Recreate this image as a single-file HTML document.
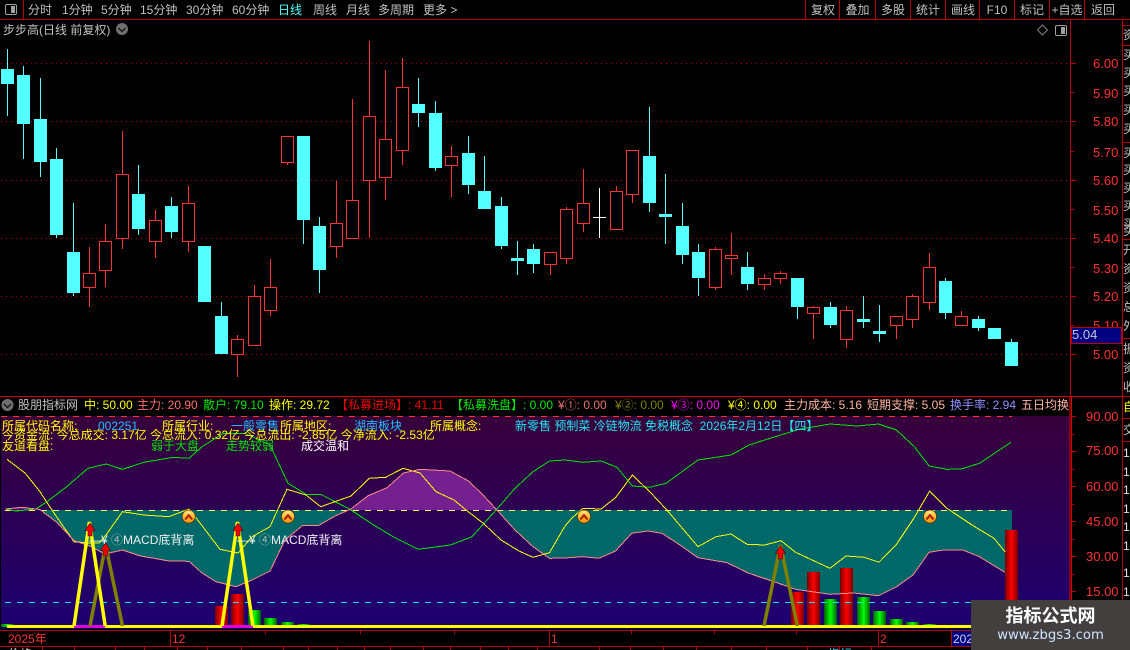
<!DOCTYPE html>
<html>
<head>
<meta charset="utf-8">
<title>K线</title>
<style>
html,body{margin:0;padding:0;background:#000;}
#r{position:relative;width:1130px;height:650px;overflow:hidden;background:#000;font-family:"Liberation Sans","WenQuanYi Zen Hei","Noto Sans CJK SC",sans-serif;font-size:12px;color:#c0c0c0;}
svg{position:absolute;left:0;top:0;}
.t{position:absolute;white-space:nowrap;line-height:14px;height:14px;}
.p{color:#ff3232;font-size:13px;left:1093px;}
.q{color:#ff3232;font-size:13px;left:1086px;}
.b{text-align:center;top:3px;}
.y{color:#ffff00}.c{color:#20c0ff}.a{color:#22e6f0}.g{color:#00e800}
#col{position:absolute;left:1123px;top:0;width:7px;height:650px;overflow:hidden;}
#wm{position:absolute;left:971px;top:600px;width:159px;height:50px;background:#433f3f;}
</style>
</head>
<body>
<div id="r">
<svg width="1130" height="650" viewBox="0 0 1130 650">
<defs>
<linearGradient id="bg" x1="0" y1="0" x2="0" y2="1"><stop offset="0" stop-color="#37003a"/><stop offset="1" stop-color="#1e0072"/></linearGradient>
<linearGradient id="rb"><stop offset="0" stop-color="#7a0000"/><stop offset=".5" stop-color="#ff0000"/><stop offset="1" stop-color="#7a0000"/></linearGradient>
<linearGradient id="gb"><stop offset="0" stop-color="#006000"/><stop offset=".5" stop-color="#00ff00"/><stop offset="1" stop-color="#006000"/></linearGradient>
<linearGradient id="og" x1="0" y1="0" x2="0" y2="1"><stop offset="0" stop-color="#ffe870"/><stop offset="1" stop-color="#ff9400"/></linearGradient>
<g id="ic"><circle r="6.5" fill="url(#og)" stroke="#5a3000" stroke-width=".7"/><path d="M-4.5 2.5 0-3 4.5 2.5 2.5 3.5 0 .5-2.5 3.5z" fill="#b02400"/><path d="M-2 -2.5 0-5 2-2.5 0-3.5z" fill="#fff6c0"/></g>
<g id="ar"><path d="M0 0 5 7.5H2V13H-2V7.5H-5z" fill="#f00000" stroke="#500000" stroke-width=".6"/></g>
</defs>

<!-- grid upper -->
<path d="M1 63.5H1070M1 121.5H1070M1 180.5H1070M1 238.5H1070M1 296.5H1070M1 354.5H1070" stroke="#b00000" stroke-dasharray="1 4" fill="none" shape-rendering="crispEdges"/>

<g shape-rendering="crispEdges">
<!-- cyan candles -->
<path fill="none" stroke="#54ffff" d="M7.5 49V116M23.5 66V159M40.5 78V177M56.5 148V238M73.5 203V296M138.5 165V235M171.5 197V238M221.5 302V354M303.5 136V244M319.5 217V293M418.5 78V127M435.5 101V171M468.5 136V194M484.5 156V209M501.5 197V249M517.5 241V275M533.5 244V273M649.5 107V212M665.5 174V244M682.5 203V264M698.5 244V296M747.5 252V290M797.5 278V319M830.5 302V328M863.5 296V328M879.5 305V342M945.5 278V319M978.5 316V331M1011.5 339V366"/>
<path fill="#54ffff" d="M1 69h13V84H1zM17 75h13V124H17zM34 119h13V162H34zM50 159h13V235H50zM67 252h13V293H67zM132 194h13V229H132zM165 206h13V232H165zM198 246h13V302H198zM215 316h13V354H215zM297 136h13V220H297zM313 226h13V270H313zM412 104h13V113H412zM429 113h13V168H429zM462 153h13V185H462zM478 191h13V209H478zM495 206h13V246H495zM511 258h13V261H511zM527 249h13V264H527zM643 156h13V203H643zM659 214h13V217H659zM676 226h13V255H676zM692 252h13V278H692zM741 267h13V284H741zM791 278h13V307H791zM824 307h13V325H824zM857 319h13V322H857zM873 331h13V334H873zM939 281h13V313H939zM972 319h13V328H972zM988 328h13V339H988zM1005 342h13V366H1005z"/>
<!-- red candles -->
<path fill="none" stroke="#ff3232" d="M89.5 247V307M105.5 224V287M122.5 131V249M155.5 210V258M188.5 186V252M237.5 335V377M254.5 285V346M270.5 259V316M287.5 136V165M336.5 181V258M352.5 99V239M369.5 41V238M385.5 70V200M402.5 58V165M451.5 146V197M550.5 252V275M566.5 207V264M583.5 169V232M616.5 186V229M632.5 150V203M715.5 247V290M731.5 233V275M764.5 274V290M780.5 271V284M813.5 306V339M846.5 306V348M896.5 316V339M912.5 294V328M929.5 253V310M961.5 311V326"/>
<path fill="#000" stroke="#ff3232" d="M83.5 273.5h12V287.5h-12zM99.5 241.5h12V270.5h-12zM116.5 174.5h12V238.5h-12zM149.5 220.5h12V241.5h-12zM182.5 203.5h12V241.5h-12zM231.5 339.5h12V354.5h-12zM248.5 296.5h12V345.5h-12zM264.5 287.5h12V310.5h-12zM281.5 136.5h12V162.5h-12zM330.5 223.5h12V246.5h-12zM346.5 200.5h12V238.5h-12zM363.5 116.5h12V180.5h-12zM379.5 139.5h12V177.5h-12zM396.5 87.5h12V150.5h-12zM445.5 156.5h12V165.5h-12zM544.5 252.5h12V264.5h-12zM560.5 209.5h12V258.5h-12zM577.5 203.5h12V223.5h-12zM610.5 191.5h12V229.5h-12zM626.5 150.5h12V194.5h-12zM709.5 249.5h12V287.5h-12zM725.5 255.5h12V258.5h-12zM758.5 278.5h12V284.5h-12zM774.5 273.5h12V278.5h-12zM807.5 307.5h12V313.5h-12zM840.5 310.5h12V339.5h-12zM890.5 316.5h12V325.5h-12zM906.5 296.5h12V319.5h-12zM923.5 267.5h12V302.5h-12zM955.5 316.5h12V325.5h-12z"/>
<!-- white doji -->
<path fill="none" stroke="#fff" d="M599.5 188V238M593 217.5H606"/>
</g>

<!-- lower panel -->
<rect x="1" y="416" width="1069" height="213" fill="url(#bg)"/>
<polygon fill="#006868" points="40,510 57.6,523 74,540.7 90,546 105,554 122.5,550 140.5,556 169,561 189,561.3 202,573 216,581.7 236,586.7 252,580 270,571 285,540 302.7,525.3 319,525.3 335,516 349.5,510"/>
<polygon fill="#006868" points="497.3,510 515,530 533,546.7 549.5,558.3 565,558 583,556.7 599,558.3 615.5,551 631.7,533.3 648,531 662,533.3 680,545 698,557.7 727,562.7 749,573.3 774,581.7 795.6,589.3 830,594.3 853,593 878.5,595.7 896.5,586.7 913,575 929,552.3 943.4,550 963,550 979.4,556.7 1005,572.3 1012,576 1012,510"/>
<polygon fill="#74208e" points="351,510 367.6,496 387,487.7 403.6,473 420,469.3 450,471 468.5,481 483,495 497,510"/>
<polygon fill="#74208e" points="5.4,509 21.6,507.3 40,509.5"/>

<g shape-rendering="crispEdges">
<!-- bars -->
<rect x="1" y="624" width="13" height="3" fill="url(#gb)"/>
<rect x="215" y="606" width="13" height="21" fill="url(#rb)"/>
<rect x="231" y="594" width="13" height="33" fill="url(#rb)"/>
<rect x="248" y="610" width="13" height="17" fill="url(#gb)"/>
<rect x="264" y="618" width="13" height="9" fill="url(#gb)"/>
<rect x="281" y="622" width="13" height="5" fill="url(#gb)"/>
<rect x="297" y="624" width="13" height="3" fill="url(#gb)"/>
<rect x="791" y="592" width="13" height="35" fill="url(#rb)"/>
<rect x="807" y="572" width="13" height="55" fill="url(#rb)"/>
<rect x="824" y="599" width="13" height="28" fill="url(#gb)"/>
<rect x="840" y="568" width="13" height="59" fill="url(#rb)"/>
<rect x="857" y="597" width="13" height="30" fill="url(#gb)"/>
<rect x="873" y="611" width="13" height="16" fill="url(#gb)"/>
<rect x="890" y="619" width="13" height="8" fill="url(#gb)"/>
<rect x="906" y="622" width="13" height="5" fill="url(#gb)"/>
<rect x="923" y="624" width="13" height="3" fill="url(#gb)"/>
<rect x="1005" y="530" width="13" height="97" fill="url(#rb)"/>
<!-- dashed levels -->
<path d="M5 510.5H1012" stroke="#ffff66" stroke-dasharray="6 6" fill="none"/>
<path d="M5 602.5H1070" stroke="#00e8f0" stroke-dasharray="6 6" fill="none"/>
<path d="M1 416.5H1012" stroke="#ff3030" stroke-dasharray="6 6" fill="none"/>
<!-- thin lines -->
<polyline fill="none" stroke="#00e800" points="5.4,509 16,511 36,509 47,501.7 66.7,486.7 88,468.3 106,464 122.5,469.3 144,462.3 173,457.3 189,458.3 202,446.7 223.4,433.3 245,433.3 270,445 288,483.3 306,494.3 320.7,494.3 349.5,509 371,523.3 393,536.7 418,549.3 450.5,545 472,536.7 497,509 515,488.3 533,471.7 549.5,461 565,460 583,462.3 601,461 617,467.3 632.4,486 649.7,487.3 666,483.3 698,460 731,455 749,445 767,439.3 799,429.3 830,424 857,426 878.5,424 896.5,430 914.5,446.7 929,466 947,469.3 961.4,469 979.4,463.3 1011,442.3"/>
<polyline fill="none" stroke="#ffff00" points="7,459.3 25,473 40,491.7 50.5,508 74,541.7 90,543 99,543 106,535 122.5,511.7 144,515 169,516.7 189,509 200,523 220,549.3 238,553 252,536.7 270,526.7 287,489.3 306,495 320.7,506.7 351,496 369.4,478.3 385.6,477.3 403,468.3 420,473 436,491.7 454,500 468.5,512 483,523 501,540 519,551 533,557.3 549.5,552.7 565,526 572,518 583,508.3 601,509 615.5,497.7 632.4,475 649.7,491.7 666,509 698,546.7 716,536.7 731,534 747,544.3 765,545 781,540.7 795.6,552.3 830,568.3 846,556 864,557.3 879,562.3 896.5,544.3 914,518 929.7,491 947,508.3 972,525 994,538.3 1005,551.7"/>
<polyline fill="none" stroke="#ff8a8a" points="5.4,509 21.6,507.3 40,509.5 57.6,523 74,540.7 90,546 105,554 122.5,550 140.5,556 169,561 189,561.3 202,573 216,581.7 236,586.7 252,580 270,571 285,540 302.7,525.3 319,525.3 335,516 351,509 367.6,496 387,487.7 403.6,473 420,469.3 450,471 468.5,481 483,495 497,510 515,530 533,546.7 549.5,558.3 565,558 583,556.7 599,558.3 615.5,551 631.7,533.3 648,531 662,533.3 680,545 698,557.7 727,562.7 749,573.3 774,581.7 795.6,589.3 830,594.3 853,593 878.5,595.7 896.5,586.7 913,575 929,552.3 943.4,550 963,550 979.4,556.7 1005,572.3"/>
<!-- baseline -->
<rect x="1" y="628" width="1069" height="1" fill="#000060"/>
<rect x="7" y="625" width="1063" height="3" fill="#ffff00"/>
<rect x="74" y="625" width="31" height="3" fill="#e000e0"/>
<rect x="222" y="625" width="31" height="3" fill="#e000e0"/>
</g>
<!-- triangles -->
<polyline points="90,626 105.6,545 122.5,626" fill="none" stroke="#808000" stroke-width="3.5"/>
<polyline points="74,626 89.4,522 105.2,626" fill="none" stroke="#ffff00" stroke-width="3.5"/>
<polyline points="222,626 237.5,522 253,626" fill="none" stroke="#ffff00" stroke-width="3.5"/>
<polyline points="764,626 780.5,545 797.4,626" fill="none" stroke="#808000" stroke-width="3.5"/>
<use href="#ar" x="90" y="523"/><use href="#ar" x="105.5" y="543"/><use href="#ar" x="238" y="523"/><use href="#ar" x="780.5" y="546"/>
<use href="#ic" x="188.7" y="516.5"/><use href="#ic" x="288" y="516.5"/><use href="#ic" x="584" y="516.5"/><use href="#ic" x="930" y="516.5"/>

<g shape-rendering="crispEdges" fill="none" stroke="#b80000">
<!-- frame lines -->
<path d="M0 19.5H1130M23.5 0V19M805.5 0V19M839.5 0V19M875.5 0V19M910.5 0V19M945.5 0V19M979.5 0V19M1014.5 0V19M1049.5 0V19M1084.5 0V19"/>
<path d="M1070.5 19V396M1122.5 19V650M1122 25.5H1130M1122 45.5H1130M1122 142.5H1130M1122 239.5H1130M1122 338.5H1130M1122 396.5H1130M1122 418.5H1130M1122 441.5H1130"/>
<path d="M1071 63.5h5M1071 92.5h3M1071 121.5h5M1071 151.5h3M1071 180.5h5M1071 209.5h3M1071 238.5h5M1071 267.5h3M1071 296.5h5M1071 325.5h3M1071 354.5h5"/>
<path d="M1071 416.5h5M1071 434.5h3M1071 451.5h5M1071 469.5h3M1071 486.5h5M1071 504.5h3M1071 521.5h5M1071 539.5h3M1071 556.5h5M1071 574.5h3M1071 591.5h5M1071 609.5h3"/>
<path d="M0 396.5H1122M1070 396V650" stroke="#d80000" stroke-width="1"/>
<path d="M1071.5 396V650" stroke="#d80000"/>
<path d="M0 630.5H1070M0 646.5H1070"/>
<path d="M170.5 631V646M549.5 631V646M878.5 631V646M951.5 631V646M265.5 631v3M360.5 631v3M454.5 631v3M631.5 631v3M714.5 631v3M796.5 631v3"/>
<path d="M42.5 646v4M74.5 646v4M115.5 646v4M144.5 646v4M177.5 646v4M207.5 646v4M241.5 646v4M283.5 646v4M308.5 646v4M337.5 646v4M364.5 646v4M390.5 646v4M423.5 646v4M450.5 646v4M480.5 646v4M508.5 646v4M537.5 646v4M599.5 646v4M630.5 646v4M663.5 646v4M696.5 646v4M731.5 646v4M766.5 646v4M807.5 646v4M839.5 646v4M871.5 646v4"/>
</g>
<!-- 5.04 box bg -->
<rect x="1071.5" y="327.5" width="50" height="16" fill="#000080" stroke="#b80000" shape-rendering="crispEdges"/>
<rect x="952" y="631" width="19" height="15" fill="#000080"/>
<!-- top-left icon -->
<rect x="5.5" y="4.5" width="11" height="10" rx="1.5" fill="none" stroke="#a0a0a0"/><rect x="11" y="6" width="4" height="7" fill="#a0a0a0"/>
<!-- right small icons -->
<path d="M1042.5 25 1047.5 30 1042.5 35 1037.5 30z" fill="none" stroke="#808080"/>
<rect x="1055.5" y="25.5" width="11" height="10" rx="1.5" fill="none" stroke="#a0a0a0"/><rect x="1061" y="27" width="4" height="7" fill="#a0a0a0"/>
<!-- circle chevrons -->
<circle cx="122" cy="29" r="6" fill="#707070"/><path d="M118.5 28 122 31.5 125.5 28" fill="none" stroke="#111" stroke-width="1.3"/>
<circle cx="7.5" cy="405" r="6" fill="#707070"/><path d="M4 404 7.5 407.5 11 404" fill="none" stroke="#111" stroke-width="1.3"/>
</svg>

<!-- toolbar -->
<div class="t" style="left:28px;top:3px">分时</div>
<div class="t" style="left:62px;top:3px">1分钟</div>
<div class="t" style="left:101px;top:3px">5分钟</div>
<div class="t" style="left:140px;top:3px">15分钟</div>
<div class="t" style="left:186px;top:3px">30分钟</div>
<div class="t" style="left:232px;top:3px">60分钟</div>
<div class="t" style="left:278px;top:3px;color:#54ffff">日线</div>
<div class="t" style="left:313px;top:3px">周线</div>
<div class="t" style="left:346px;top:3px">月线</div>
<div class="t" style="left:378px;top:3px">多周期</div>
<div class="t" style="left:423px;top:3px">更多 &gt;</div>
<div class="t b" style="left:806px;width:34px">复权</div>
<div class="t b" style="left:840px;width:35px">叠加</div>
<div class="t b" style="left:876px;width:34px">多股</div>
<div class="t b" style="left:911px;width:34px">统计</div>
<div class="t b" style="left:946px;width:34px">画线</div>
<div class="t b" style="left:980px;width:34px">F10</div>
<div class="t b" style="left:1015px;width:34px">标记</div>
<div class="t b" style="left:1050px;width:34px">+自选</div>
<div class="t b" style="left:1085px;width:36px">返回</div>
<div class="t" style="left:3px;top:23px">步步高(日线 前复权)</div>

<!-- price axis -->
<div class="t p" style="top:57px">6.00</div>
<div class="t p" style="top:87px">5.90</div>
<div class="t p" style="top:115px">5.80</div>
<div class="t p" style="top:146px">5.70</div>
<div class="t p" style="top:174px">5.60</div>
<div class="t p" style="top:204px">5.50</div>
<div class="t p" style="top:232px">5.40</div>
<div class="t p" style="top:262px">5.30</div>
<div class="t p" style="top:290px">5.20</div>
<div class="t p" style="top:319px;height:8px;overflow:hidden">5.10</div>
<div class="t p" style="top:348px">5.00</div>
<div class="t" style="left:1072px;top:328px;font-size:13px;color:#c8c8e0">5.04</div>

<!-- indicator header -->
<div class="t" style="left:18px;top:398px">股朋指标网</div>
<div class="t y" style="left:84px;top:398px">中: 50.00</div>
<div class="t" style="left:137px;top:398px;color:#ff7070">主力: 20.90</div>
<div class="t g" style="left:203px;top:398px">散户: 79.10</div>
<div class="t y" style="left:269px;top:398px">操作: 29.72</div>
<div class="t" style="left:336px;top:398px;color:#f00000">【私募进场】: 41.11</div>
<div class="t g" style="left:451px;top:398px">【私募洗盘】: 0.00</div>
<div class="t" style="left:558px;top:398px;color:#e87070">¥①: 0.00</div>
<div class="t" style="left:615px;top:398px;color:#808000">¥②: 0.00</div>
<div class="t" style="left:671px;top:398px;color:#ff00ff">¥③: 0.00</div>
<div class="t y" style="left:728px;top:398px">¥④: 0.00</div>
<div class="t" style="left:784px;top:398px;color:#ffb4a0">主力成本: 5.16</div>
<div class="t" style="left:867px;top:398px;color:#ffb4a0">短期支撑: 5.05</div>
<div class="t" style="left:950px;top:398px;color:#9090ff">换手率: 2.94</div>
<div class="t" style="left:1021px;top:398px;color:#ffb4a0;width:49px;overflow:hidden">五日均换</div>

<!-- overlay text -->
<div class="t y" style="left:2px;top:419px">所属代码名称:</div>
<div class="t c" style="left:98px;top:419px">002251</div>
<div class="t y" style="left:162px;top:419px">所属行业:</div>
<div class="t c" style="left:231px;top:419px">一般零售</div>
<div class="t y" style="left:280px;top:419px">所属地区:</div>
<div class="t c" style="left:354px;top:419px">湖南板块</div>
<div class="t y" style="left:430px;top:419px">所属概念:</div>
<div class="t a" style="left:515px;top:419px">新零售 预制菜 冷链物流 免税概念&nbsp; 2026年2月12日【四】</div>
<div class="t y" style="left:2px;top:428px">今资金流: 今总成交: 3.17亿 今总流入: 0.32亿 今总流出: -2.85亿 今净流入: -2.53亿</div>
<div class="t y" style="left:2px;top:439px">友道看盘:</div>
<div class="t g" style="left:151px;top:439px">弱于大盘</div>
<div class="t g" style="left:226px;top:439px">走势较弱</div>
<div class="t" style="left:301px;top:439px;color:#fff">成交温和</div>

<div class="t" style="left:89px;top:533px;color:#f0f0f0">—¥ <span style="color:#b0b0b0">④</span>MACD底背离</div>
<div class="t" style="left:237px;top:533px;color:#f0f0f0">—¥ <span style="color:#b0b0b0">④</span>MACD底背离</div>

<!-- lower axis -->
<div class="t q" style="top:410px">90.00</div>
<div class="t q" style="top:444px">75.00</div>
<div class="t q" style="top:480px">60.00</div>
<div class="t q" style="top:515px">45.00</div>
<div class="t q" style="top:550px">30.00</div>
<div class="t q" style="top:585px">15.00</div>

<!-- time axis -->
<div class="t" style="left:8px;top:632px;color:#ff3232">2025年</div>
<div class="t" style="left:172px;top:632px;color:#ff3232">12</div>
<div class="t" style="left:551px;top:632px;color:#ff3232">1</div>
<div class="t" style="left:880px;top:632px;color:#ff3232">2</div>
<div class="t" style="left:953px;top:632px;color:#d0d0f0">2026</div>
<div class="t" style="left:8px;top:647px">价格</div>
<div class="t a" style="left:828px;top:647px">指标</div>

<!-- right column -->
<div id="col">
<div class="t" style="left:0;top:28px">资</div>
<div class="t" style="left:0;top:48px">买</div>
<div class="t" style="left:0;top:66px">买</div>
<div class="t" style="left:0;top:84px">买</div>
<div class="t" style="left:0;top:103px">买</div>
<div class="t" style="left:0;top:122px">买</div>
<div class="t" style="left:0;top:146px">买</div>
<div class="t" style="left:0;top:163px">买</div>
<div class="t" style="left:0;top:181px">买</div>
<div class="t" style="left:0;top:199px">买</div>
<div class="t" style="left:0;top:217px">买</div>
<div class="t" style="left:0;top:224px">买</div>
<div class="t" style="left:0;top:243px">开</div>
<div class="t" style="left:0;top:262px">资</div>
<div class="t" style="left:0;top:281px">资</div>
<div class="t" style="left:0;top:300px">总</div>
<div class="t" style="left:0;top:319px">外</div>
<div class="t" style="left:0;top:342px">振</div>
<div class="t" style="left:0;top:361px">资</div>
<div class="t" style="left:0;top:380px">收</div>
<div class="t y" style="left:0;top:400px">自</div>
<div class="t" style="left:0;top:423px">交</div>
<div class="t" style="left:0;top:446px;color:#e0e0e0">1</div>
<div class="t" style="left:0;top:465px;color:#e0e0e0">1</div>
<div class="t" style="left:0;top:483px;color:#e0e0e0">1</div>
<div class="t" style="left:0;top:502px;color:#e0e0e0">1</div>
<div class="t" style="left:0;top:520px;color:#e0e0e0">1</div>
<div class="t" style="left:0;top:539px;color:#e0e0e0">1</div>
<div class="t" style="left:0;top:566px;color:#e0e0e0">1</div>
<div class="t" style="left:0;top:585px;color:#e0e0e0">1</div>
</div>

<!-- watermark -->
<div id="wm">
<div class="t" style="left:0;width:159px;text-align:center;top:4px;height:22px;line-height:22px;font-size:18px;font-weight:bold;color:#fff;font-family:'Noto Sans CJK SC',sans-serif">指标公式网</div>
<div class="t" style="left:0;width:159px;text-align:center;top:27px;height:18px;line-height:18px;font-size:13.2px;color:#cfe4ff;font-family:'DejaVu Sans',sans-serif">www.zbgs3.com</div>
</div>
</div>
</body>
</html>
